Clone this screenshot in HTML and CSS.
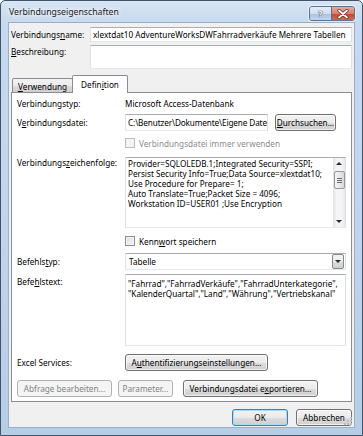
FILE: index.html
```html
<!DOCTYPE html>
<html lang="de">
<head>
    <meta charset="UTF-8">
    <title>Verbindungseigenschaften</title>
    <link rel="stylesheet" href="styles.css">
</head>
<body>
    <div class="window">
        <div class="titlebar">
            <span class="title">Verbindungseigenschaften</span>
            <div class="caption-buttons">
                <span class="cap-btn help">?</span>
                <span class="cap-btn close">
                    <svg width="12" height="10" viewBox="0 0 12 10">
                        <path d="M2 1.5 L10 8.5 M10 1.5 L2 8.5" stroke="#5a2418" stroke-width="3.2" stroke-linecap="round"/>
                        <path d="M2 1.5 L10 8.5 M10 1.5 L2 8.5" stroke="#ffffff" stroke-width="1.8" stroke-linecap="round"/>
                    </svg>
                </span>
            </div>
        </div>

        <div class="client">
            <div class="top-row">
                <span class="top-label">Verbindungs<u>n</u>ame:</span>
                <div class="textbox name-box">xlextdat10 AdventureWorksDWFahrradverkäufe Mehrere Tabellen</div>
            </div>
            <div class="top-row">
                <span class="top-label desc-label"><u>B</u>eschreibung:</span>
                <div class="textbox desc-box"></div>
            </div>

            <div class="tabs">
                <div class="tab"><u>V</u>erwendung</div>
                <div class="tab selected">Defin<u>i</u>tion</div>
            </div>

            <div class="tab-page">
                <div class="field-row type-row">
                    <span class="field-label">Verbindungstyp:</span>
                    <span>Microsoft Access-Datenbank</span>
                </div>
                <div class="field-row file-row">
                    <span class="field-label">V<u>e</u>rbindungsdatei:</span>
                    <div class="textbox file-box">C:\Benutzer\Dokumente\Eigene Date</div>
                    <div class="button browse-btn"><span><u>D</u>urchsuchen...</span></div>
                </div>
                <div class="check-row always-row disabled">
                    <span class="checkbox"></span>
                    <span>Verbindungsdatei immer verwenden</span>
                </div>
                <div class="field-row conn-row">
                    <span class="field-label">Verbindungs<u>z</u>eichenfolge:</span>
                    <div class="textbox conn-box">
                        <div class="conn-text">Provider=SQLOLEDB.1;Integrated Security=SSPI;<br>Persist Security Info=True;Data Source=xlextdat10;<br>Use Procedure for Prepare= 1;<br>Auto Translate=True;Packet Size = 4096;<br>Workstation ID=USER01 ;Use Encryption</div>
                        <div class="scrollbar">
                            <span class="arrow up"></span>
                            <span class="thumb"><i></i><i></i><i></i></span>
                            <span class="arrow down"></span>
                        </div>
                    </div>
                </div>
                <div class="check-row password-row">
                    <span class="checkbox"></span>
                    <span>Kenn<u>w</u>ort speichern</span>
                </div>
                <div class="field-row cmdtype-row">
                    <span class="field-label">Befehls<u>t</u>yp:</span>
                    <div class="textbox combo">
                        <span class="combo-text">Tabelle</span>
                        <span class="combo-btn"><span class="arrow down"></span></span>
                    </div>
                </div>
                <div class="field-row cmdtext-row">
                    <span class="field-label">Befe<u>h</u>lstext:</span>
                    <div class="textbox cmd-box">"Fahrrad","FahrradVerkäufe","FahrradUnterkategorie",<br>"KalenderQuartal","Land","Währung","Vertriebskanal"</div>
                </div>
                <div class="field-row excel-row">
                    <span class="field-label">Excel Services:</span>
                    <div class="button auth-btn"><span>A<u>u</u>thentifizierungseinstellungen...</span></div>
                </div>
                <div class="button-row">
                    <div class="button disabled edit-btn">Abfrage bearbeiten...</div>
                    <div class="button disabled param-btn">Parameter...</div>
                    <div class="button export-btn"><span>Verbindungsdatei e<u>x</u>portieren...</span></div>
                </div>
            </div>

            <div class="footer">
                <div class="button default dialog-btn">OK</div>
                <div class="button dialog-btn">Abbrechen</div>
            </div>
            <svg class="grip" width="10" height="10" viewBox="0 0 10 10">
                <rect x="7" y="1" width="2" height="2" fill="#b8bec6"/>
                <rect x="4" y="4" width="2" height="2" fill="#b8bec6"/>
                <rect x="7" y="4" width="2" height="2" fill="#b8bec6"/>
                <rect x="1" y="7" width="2" height="2" fill="#b8bec6"/>
                <rect x="4" y="7" width="2" height="2" fill="#b8bec6"/>
                <rect x="7" y="7" width="2" height="2" fill="#b8bec6"/>
            </svg>
        </div>
    </div>
</body>
</html>
```

FILE: styles.css
```css
* {
    margin: 0;
    padding: 0;
    box-sizing: border-box;
}

html, body {
    width: 100%;
    height: 100%;
    overflow: hidden;
    background: #fff;
}

body {
    font-family: "Noto Sans", sans-serif;
    font-size: 8.2px;
    color: #000;
}

u {
    text-decoration: underline;
    text-underline-offset: 1px;
}

/* Fensterrahmen */
.window {
    width: 363px;
    height: 436px;
    border: 1px solid #415369;
    border-radius: 5px 5px 0 0;
    background: linear-gradient(to bottom, #d7e5f4 0, #c6d9ee 22px, #bfd4eb 60%, #b6cde6 100%);
    padding: 0 7px 7px 7px;
    display: flex;
    flex-direction: column;
}

.titlebar {
    height: 21px;
    display: flex;
    align-items: center;
    justify-content: space-between;
}

.title {
    font-size: 8.7px;
    margin-left: 1px;
    color: #1a1a1a;
    text-shadow: 0 0 4px #fff, 0 0 6px #fff;
}

.caption-buttons {
    display: flex;
    align-self: flex-start;
    margin-top: 5px;
    border: 1px solid #5d708b;
    border-radius: 3px;
    overflow: hidden;
    box-shadow: 0 0 0 1px rgba(255, 255, 255, 0.5);
}

.cap-btn {
    width: 22px;
    height: 13px;
    display: flex;
    align-items: center;
    justify-content: center;
}

.help {
    background: linear-gradient(to bottom, #e4edf8 0%, #d0deef 50%, #a9c1de 51%, #c3d6ec 100%);
    border-right: 1px solid #5d708b;
    color: #fff;
    font-weight: bold;
    font-size: 9px;
    text-shadow: 0 0 1px #42556f, 0 0 1px #42556f, 0 0 1px #42556f;
}

.close {
    background: linear-gradient(to bottom, #e9a99b 0%, #d9806d 50%, #c5472f 51%, #d36a4f 100%);
}

/* Clientbereich */
.client {
    flex: 1;
    position: relative;
    background: #f0f0f0;
    border: 1px solid #9aafc8;
    padding: 0 2px;
}

.top-row {
    display: flex;
    margin-top: 3px;
}

.top-row:first-child {
    margin-top: 4px;
}

.top-label {
    width: 79px;
    display: flex;
    align-items: center;
}

.desc-label {
    align-items: flex-start;
    padding-top: 1px;
}

.textbox {
    background: #fff;
    border: 1px solid #abadb3;
    border-color: #abadb3 #dbdfe6 #e3e9ef #e2e3ea;
    white-space: nowrap;
    overflow: hidden;
}

.name-box {
    flex: 1;
    height: 15px;
    line-height: 13px;
    padding-left: 2px;
}

.desc-box {
    flex: 1;
    height: 24px;
}

/* Registerkarten */
.tabs {
    display: flex;
    align-items: flex-end;
    height: 18px;
    margin-top: 6px;
    margin-bottom: -1px;
    padding-left: 1px;
    position: relative;
    z-index: 1;
}

.tab {
    height: 14px;
    width: 61px;
    margin-bottom: 1px;
    border: 1px solid #898c95;
    border-bottom: none;
    border-radius: 2px 2px 0 0;
    background: linear-gradient(to bottom, #f2f2f2 0%, #ebebeb 50%, #dddddd 51%, #cfcfcf 100%);
    display: flex;
    align-items: center;
    justify-content: center;
    padding-top: 1px;
}

.tab.selected {
    height: 18px;
    width: 56px;
    margin-left: -1px;
    margin-bottom: 0;
    background: #fff;
    padding-bottom: 2px;
}

.tab-page {
    background: #fff;
    border: 1px solid #898c95;
    padding: 0 5px 4px 5px;
}

.field-row {
    display: flex;
    align-items: center;
}

.field-label {
    width: 108px;
    flex-shrink: 0;
}

.type-row {
    margin-top: 3px;
    height: 14px;
}

.file-row {
    margin-top: 3px;
    height: 19px;
}

.file-box {
    width: 143px;
    height: 17px;
    line-height: 15px;
    padding-left: 2px;
    letter-spacing: -0.12px;
}

.browse-btn {
    width: 61px;
    height: 19px;
    margin-left: 7px;
}

.check-row {
    display: flex;
    align-items: center;
    height: 12px;
    padding-left: 108px;
}

.always-row {
    margin-top: 5px;
}

.password-row {
    margin-top: 7px;
}

.checkbox {
    width: 10px;
    height: 10px;
    margin-right: 4px;
    border: 1px solid #8e8f8f;
    background: linear-gradient(135deg, #dcdcdc 0%, #f6f6f6 100%);
    box-shadow: inset 0 0 0 1px #f4f4f4;
}

.disabled {
    color: #8d8d8d;
}

.disabled .checkbox {
    border-color: #bcbcbc;
    background: #f4f4f4;
}

.conn-row {
    margin-top: 8px;
    align-items: flex-start;
}

.conn-box {
    flex: 1;
    height: 71px;
    display: flex;
    white-space: normal;
}

.conn-text {
    flex: 1;
    padding: 1px 0 0 2px;
    line-height: 10px;
    white-space: nowrap;
    overflow: hidden;
}

.scrollbar {
    width: 12px;
    background: linear-gradient(to right, #e3e3e3 0%, #f5f5f5 30%, #f5f5f5 70%, #e8e8e8 100%);
    display: flex;
    flex-direction: column;
    align-items: center;
}

.arrow {
    width: 0;
    height: 0;
    border-left: 3px solid transparent;
    border-right: 3px solid transparent;
}

.arrow.up {
    border-bottom: 3px solid #2a2a2a;
    margin-top: 4px;
}

.arrow.down {
    border-top: 3px solid #2a2a2a;
}

.scrollbar .arrow.down {
    margin-top: auto;
    margin-bottom: 4px;
}

.thumb {
    width: 11px;
    height: 18px;
    margin-top: 6px;
    border: 1px solid #979797;
    border-radius: 2px;
    background: linear-gradient(to right, #f4f4f4 0%, #e9e9e9 50%, #d8d8d8 100%);
    display: flex;
    flex-direction: column;
    align-items: center;
    justify-content: center;
    gap: 1px;
}

.thumb i {
    display: block;
    width: 5px;
    height: 1px;
    background: #6c6c6c;
}

.cmdtype-row {
    margin-top: 6px;
}

.combo {
    flex: 1;
    height: 17px;
    display: flex;
    align-items: center;
    padding: 1px;
}

.combo-text {
    flex: 1;
    padding-left: 2px;
}

.combo-btn {
    width: 12px;
    height: 15px;
    border: 1px solid #878787;
    border-radius: 2px;
    background: linear-gradient(to bottom, #f2f2f2 0%, #ebebeb 50%, #dddddd 51%, #cfcfcf 100%);
    display: flex;
    align-items: center;
    justify-content: center;
}

.cmdtext-row {
    margin-top: 4px;
    align-items: flex-start;
}

.cmdtext-row .field-label {
    padding-top: 2px;
}

.cmd-box {
    flex: 1;
    height: 72px;
    white-space: normal;
    padding: 4px 0 0 2px;
    line-height: 10px;
}

.excel-row {
    margin-top: 8px;
}

.auth-btn {
    width: 143px;
    height: 16px;
}

.button-row {
    display: flex;
    margin-top: 9px;
}

/* Schaltflächen */
.button {
    height: 17px;
    border: 1px solid #707070;
    border-radius: 3px;
    background: linear-gradient(to bottom, #f2f2f2 0%, #ebebeb 50%, #dddddd 51%, #cfcfcf 100%);
    box-shadow: inset 0 0 0 1px rgba(255, 255, 255, 0.7);
    display: flex;
    align-items: center;
    justify-content: center;
    white-space: nowrap;
}

.button.disabled {
    border-color: #adb2b5;
    background: #f4f4f4;
    box-shadow: none;
    color: #838383;
}

.edit-btn {
    width: 95px;
}

.param-btn {
    width: 55px;
    margin-left: 6px;
}

.export-btn {
    width: 135px;
    margin-left: 10px;
}

.footer {
    display: flex;
    justify-content: flex-end;
    gap: 8px;
    margin-top: 7px;
}

.dialog-btn {
    width: 56px;
}

.button.default {
    border-color: #3c7fb1;
    box-shadow: inset 0 0 0 1px #a7dcf6;
}

.grip {
    position: absolute;
    right: 1px;
    bottom: 1px;
}
```
